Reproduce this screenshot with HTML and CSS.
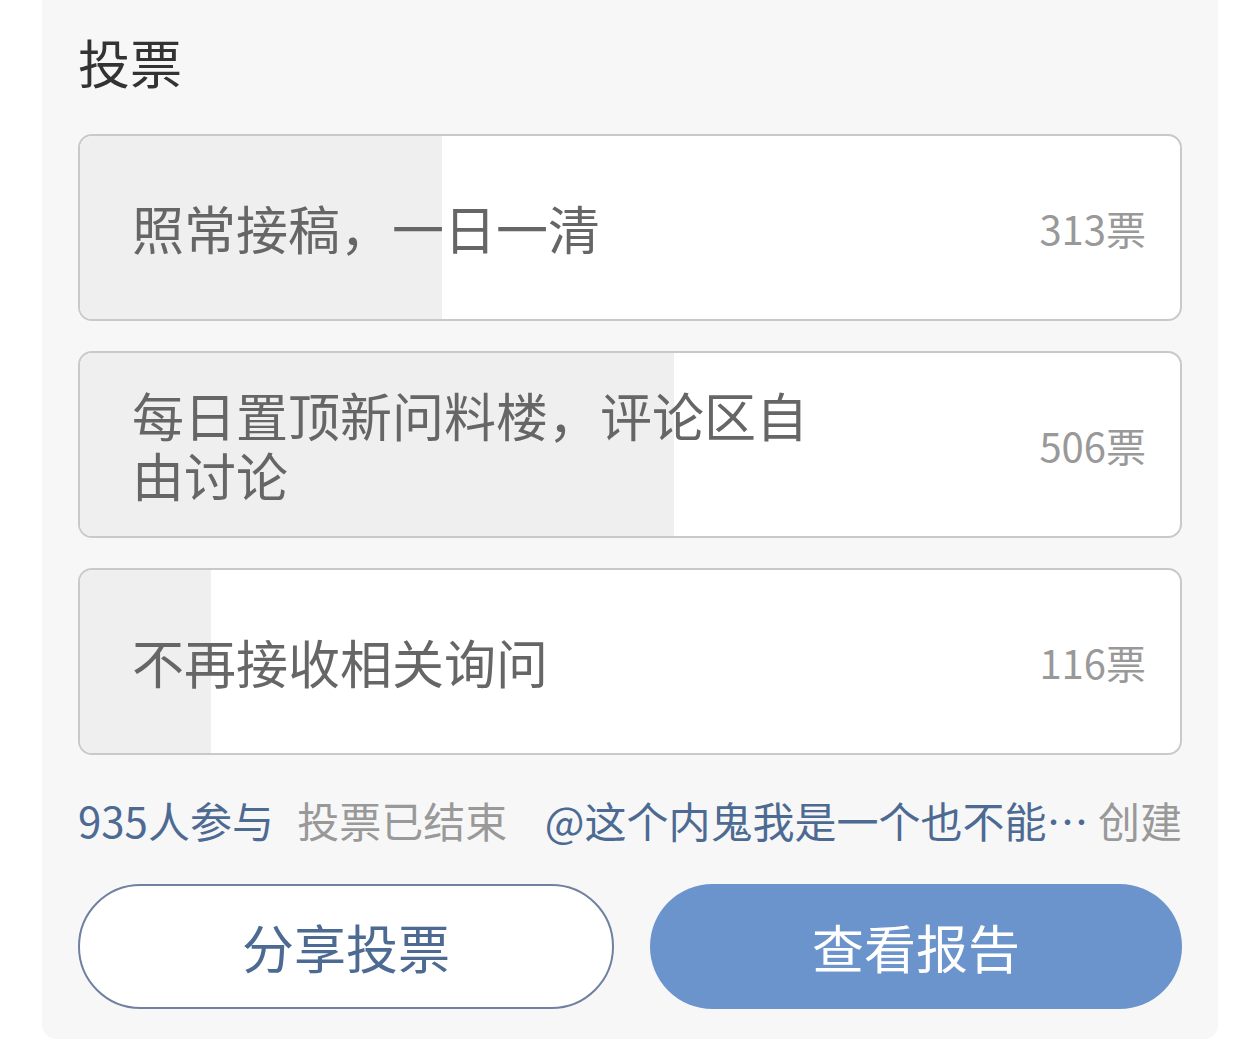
FILE: index.html
```html
<!doctype html>
<html lang="zh-CN">
    <head>
        <meta charset="UTF-8" />
        <meta name="viewport" content="width=device-width, initial-scale=1.0" />
        <title>投票</title>
        <link rel="stylesheet" href="styles.css">
    </head>
    <body>
        <div class="vote-card">
            <h2 class="vote-title">投票</h2>

            <div class="options">
                <div class="option">
                    <div class="option-fill" style="width: 32.9%"></div>
                    <span class="option-text">照常接稿，一日一清</span>
                    <span class="option-count">313票</span>
                </div>
                <div class="option">
                    <div class="option-fill" style="width: 54%"></div>
                    <span class="option-text">每日置顶新问料楼，评论区自由讨论</span>
                    <span class="option-count">506票</span>
                </div>
                <div class="option">
                    <div class="option-fill" style="width: 11.9%"></div>
                    <span class="option-text">不再接收相关询问</span>
                    <span class="option-count">116票</span>
                </div>
            </div>

            <div class="vote-meta">
                <span class="meta-left">
                    <span class="blue">935人参与</span>
                    <span class="gray">投票已结束</span>
                </span>
                <span class="meta-right">
                    <span class="blue">@这个内鬼我是一个也不能…</span>
                    <span class="gray">创建</span>
                </span>
            </div>

            <div class="actions">
                <button class="btn btn-outline">分享投票</button>
                <button class="btn btn-solid">查看报告</button>
            </div>
        </div>
    </body>
</html>
```

FILE: styles.css
```css
body {
    margin: 0;
    background: #ffffff;
    font-family: "Noto Sans CJK SC", "Noto Sans", sans-serif;
}
.vote-card {
    margin: 0 42px 0 42px;
    width: 1104px;
    padding: 27px 36px 30px 36px;
    background: #f7f7f7;
    border-radius: 0 0 14px 14px;
}
.vote-title {
    margin: 0 0 37px 0;
    font-size: 52px;
    line-height: 70px;
    font-weight: 400;
    color: #333333;
}
.options {
    display: flex;
    flex-direction: column;
    gap: 30px;
}
.option {
    position: relative;
    height: 183px;
    display: flex;
    align-items: center;
    justify-content: space-between;
    padding: 0 34px 0 52px;
    background: #ffffff;
    border: 2px solid #c9c9c9;
    border-radius: 14px;
    overflow: hidden;
}
.option-fill {
    position: absolute;
    left: 0;
    top: 0;
    bottom: 0;
    background: #efefef;
}
.option-text {
    position: relative;
    max-width: 690px;
    font-size: 52px;
    line-height: 60px;
    color: #666666;
}
.option-count {
    position: relative;
    font-size: 40px;
    color: #999999;
}
.vote-meta {
    display: flex;
    justify-content: space-between;
    margin: 37px 0 36px 0;
    font-size: 42px;
    line-height: 56px;
}
.meta-left .gray {
    margin-left: 14px;
}
.blue {
    color: #4d6a93;
}
.gray {
    color: #999999;
}
.actions {
    display: flex;
    gap: 36px;
}
.btn {
    flex: 1 1 0;
    box-sizing: border-box;
    height: 125px;
    border-radius: 63px;
    font-family: inherit;
    font-size: 52px;
    cursor: pointer;
}
.btn-outline {
    background: #ffffff;
    border: 2px solid #6f80a0;
    color: #4d6a93;
}
.btn-solid {
    background: #6b93cc;
    border: none;
    color: #ffffff;
}
```
